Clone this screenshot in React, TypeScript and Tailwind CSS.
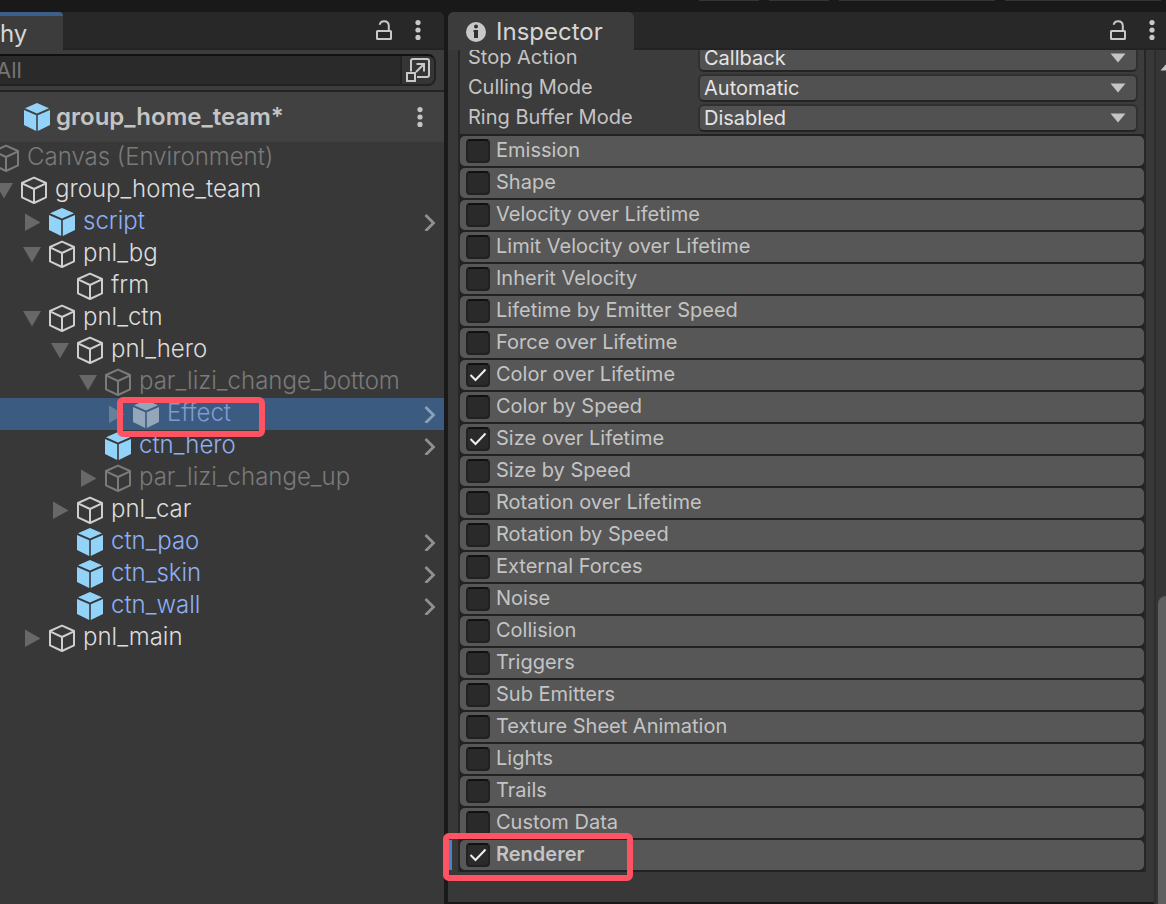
import { useState } from "react";
import clsx from "clsx";

type Kind = "object" | "prefab";

interface TreeItem {
  name: string;
  depth: number;
  kind: Kind;
  arrow?: "open" | "closed";
  dim?: boolean;
  opens?: boolean;
  selected?: boolean;
}

const TREE: TreeItem[] = [
  { name: "Canvas (Environment)", depth: 0, kind: "object", dim: true },
  { name: "group_home_team", depth: 1, kind: "object", arrow: "open" },
  { name: "script", depth: 2, kind: "prefab", arrow: "closed", opens: true },
  { name: "pnl_bg", depth: 2, kind: "object", arrow: "open" },
  { name: "frm", depth: 3, kind: "object" },
  { name: "pnl_ctn", depth: 2, kind: "object", arrow: "open" },
  { name: "pnl_hero", depth: 3, kind: "object", arrow: "open" },
  { name: "par_lizi_change_bottom", depth: 4, kind: "object", arrow: "open", dim: true },
  { name: "Effect", depth: 5, kind: "prefab", arrow: "closed", dim: true, opens: true, selected: true },
  { name: "ctn_hero", depth: 4, kind: "prefab", opens: true },
  { name: "par_lizi_change_up", depth: 4, kind: "object", arrow: "closed", dim: true },
  { name: "pnl_car", depth: 3, kind: "object", arrow: "closed" },
  { name: "ctn_pao", depth: 3, kind: "prefab", opens: true },
  { name: "ctn_skin", depth: 3, kind: "prefab", opens: true },
  { name: "ctn_wall", depth: 3, kind: "prefab", opens: true },
  { name: "pnl_main", depth: 2, kind: "object", arrow: "closed" },
];

const INDENT = ["pl-0", "pl-7", "pl-14", "pl-21", "pl-28", "pl-35"];

const FIELDS = [
  { label: "Stop Action", value: "Callback", options: ["None", "Disable", "Destroy", "Callback"] },
  { label: "Culling Mode", value: "Automatic", options: ["Automatic", "Pause", "Always Simulate"] },
  { label: "Ring Buffer Mode", value: "Disabled", options: ["Disabled", "Pause Until Replaced"] },
];

const MODULES = [
  "Emission",
  "Shape",
  "Velocity over Lifetime",
  "Limit Velocity over Lifetime",
  "Inherit Velocity",
  "Lifetime by Emitter Speed",
  "Force over Lifetime",
  "Color over Lifetime",
  "Color by Speed",
  "Size over Lifetime",
  "Size by Speed",
  "Rotation over Lifetime",
  "Rotation by Speed",
  "External Forces",
  "Noise",
  "Collision",
  "Triggers",
  "Sub Emitters",
  "Texture Sheet Animation",
  "Lights",
  "Trails",
  "Custom Data",
  "Renderer",
];

function Cube({ kind, className }: { kind: Kind; className?: string }) {
  return (
    <svg viewBox="0 0 28 28" className={clsx("size-7 shrink-0", className)} aria-hidden="true">
      {kind === "prefab" ? (
        <g fill="currentColor">
          <path d="M14 0 26 5.2 14 10.4 2 5.2Z" />
          <path d="M1 7 13.2 12.2V28L1 22Z" />
          <path d="M27 7 14.8 12.2V28L27 22Z" />
        </g>
      ) : (
        <g fill="none" stroke="currentColor" strokeWidth="2" strokeLinejoin="round">
          <path d="M14 1.6 26 7V21.4L14 27 2 21.4V7Z" />
          <path d="M2 7.4 14 13 26 7.4M14 13V27" />
        </g>
      )}
    </svg>
  );
}

function Fold({ open, className }: { open: boolean; className: string }) {
  return (
    <svg viewBox="0 0 18 18" className={clsx("size-4.5", className)} fill="currentColor" aria-hidden="true">
      <path d={open ? "M0 2H18L9 17.5Z" : "M2 0.5 17.5 9.5 2 18Z"} />
    </svg>
  );
}

function Lock() {
  return (
    <svg viewBox="0 0 16 20" className="h-5 w-4" fill="none" stroke="currentColor" strokeWidth="2" aria-hidden="true">
      <rect x="1" y="11" width="14" height="8" rx="0.6" />
      <path d="M3.6 4.8C4.2 2.4 5.8 1.2 8 1.2c3 0 4.8 1.9 4.8 4.8v5" />
    </svg>
  );
}

function Dots() {
  return (
    <svg viewBox="0 0 6 20" className="h-5 w-1.5" fill="currentColor" aria-hidden="true">
      <circle cx="3" cy="2.6" r="2.6" />
      <circle cx="3" cy="10" r="2.6" />
      <circle cx="3" cy="17.4" r="2.6" />
    </svg>
  );
}

function HierarchyRow({ item }: { item: TreeItem }) {
  const prefab = item.kind === "prefab";
  return (
    <li className={clsx("relative flex h-8 items-center pr-2", INDENT[item.depth], item.selected && "bg-[#3b5b80]")}>
      <span className="flex w-7 shrink-0 pl-[3px]">
        {item.arrow && (
          <Fold open={item.arrow === "open"} className={item.selected ? "text-[#687f97]" : "text-[#686868]"} />
        )}
      </span>
      <Cube
        kind={item.kind}
        className={
          item.selected
            ? "text-[#94a6b9]"
            : prefab
              ? "text-[#93d3fa]"
              : item.dim
                ? "text-[#7b7b7b]"
                : "text-[#cfcfcf]"
        }
      />
      <span
        className={clsx(
          "grow pb-0.5 pl-[7px] text-2xl leading-7 font-light whitespace-nowrap",
          item.selected
            ? "text-[#809bd0]"
            : prefab
              ? "text-[#8caff5]"
              : item.dim
                ? "text-[#7a7a7a]"
                : "text-[#dcdcdc]",
        )}
      >
        {item.name}
      </span>
      {item.opens && (
        <button aria-label={`Open ${item.name}`} className={item.selected ? "text-[#8ba1b8]" : "text-[#909090]"}>
          <svg viewBox="0 0 12 18" className="h-4.5 w-3" fill="none" stroke="currentColor" strokeWidth="2.8">
            <path d="M1.5 2 9.5 10 1.5 18" />
          </svg>
        </button>
      )}
      {item.selected && (
        <span className="pointer-events-none absolute -top-px left-[153px] z-10 h-10 w-[148px] rounded-md border-6 border-[#ff5364]" />
      )}
    </li>
  );
}

function Hierarchy() {
  return (
    <section className="flex w-[444px] shrink-0 flex-col overflow-hidden rounded-tr-md bg-[#383838]">
      <header className="flex h-9.5 items-stretch border-b-2 border-[#232323] bg-[#282828] text-[#c8c8c8]">
        <h2 className="-mb-0.5 w-[63px] rounded-tr-sm border-t-4 border-[#3d5f8c] bg-[#3c3c3c] text-2xl leading-9 text-[#d6d6d6]">
          hy
        </h2>
        <div className="flex grow items-center justify-end gap-[23px] pr-[23px]">
          <button aria-label="Lock hierarchy">
            <Lock />
          </button>
          <button aria-label="Hierarchy menu">
            <Dots />
          </button>
        </div>
      </header>
      <div className="border-b-2 border-[#232323] bg-[#3c3c3c] pt-1 pr-2 pb-1">
        <div className="flex h-8 overflow-hidden rounded-r-lg border-2 border-l-0 border-[#222222] border-t-[#101010] bg-[#2a2a2a]">
          <input
            aria-label="Search hierarchy"
            placeholder="All"
            className="-ml-1 min-w-0 grow text-[22px] leading-7 text-[#c8c8c8] outline-none placeholder:text-[#747474]"
          />
          <button
            aria-label="Open search window"
            className="flex w-8.5 items-center justify-center border-l-2 border-[#232323] bg-[#353535] text-[#c8c8c8]"
          >
            <svg viewBox="0 0 26 26" className="size-6.5" fill="none" stroke="currentColor" strokeWidth="2">
              <path d="M6 14.500V4a2 2 0 0 1 2-2H22a2 2 0 0 1 2 2V18a2 2 0 0 1-2 2H12" />
              <rect x="2" y="16" width="8" height="8" />
              <path d="M11 15 18.500 7.500M11.500 7H19V14.500" />
            </svg>
          </button>
        </div>
      </div>
      <div className="flex h-[50px] items-center bg-[#414141] pr-[21px] pl-[23px] text-[#c4c4c4]">
        <Cube kind="prefab" className="text-[#93d3fa]" />
        <h3 className="grow pl-[5px] text-2xl leading-8 font-semibold">group_home_team*</h3>
        <button aria-label="Prefab menu">
          <Dots />
        </button>
      </div>
      <ul className="-ml-9">
        {TREE.map((item) => (
          <HierarchyRow key={item.name} item={item} />
        ))}
      </ul>
    </section>
  );
}

function ModuleRow({ name }: { name: string }) {
  const renderer = name === "Renderer";
  const [on, setOn] = useState(renderer || name === "Color over Lifetime" || name === "Size over Lifetime");
  return (
    <li className="relative">
      <label className="flex h-7.5 items-center gap-1.5 rounded-[5px] bg-[#575757] pl-1.5">
        <span className="grid size-6 place-items-center">
          <input
            type="checkbox"
            checked={on}
            onChange={() => setOn(!on)}
            className="col-start-1 row-start-1 size-6 appearance-none rounded border-2 border-[#212121] border-t-[#101010] bg-[#2a2a2a]"
          />
          {on && (
            <svg
              viewBox="0 0 24 24"
              className="pointer-events-none col-start-1 row-start-1 size-6"
              fill="none"
              stroke="#eeeeee"
              strokeWidth="2"
              aria-hidden="true"
            >
              <path d="M4.500 12 9.500 17 19.500 6.500" />
            </svg>
          )}
        </span>
        <span className={clsx("pb-0.5 text-xl leading-7 text-[#c4c4c4]", renderer && "font-semibold")}>{name}</span>
      </label>
      {renderer && (
        <>
          <span className="absolute top-0 -left-3 h-7.5 w-1 bg-[#3e86c4]" />
          <span className="pointer-events-none absolute -top-[7px] -left-[17px] z-10 h-12 w-[190px] rounded-md border-6 border-[#ff5364]" />
        </>
      )}
    </li>
  );
}

function Inspector() {
  return (
    <section className="flex min-w-0 grow flex-col rounded-tl-md bg-[#383838]">
      <header className="flex h-9.5 rounded-tl-md border-b-2 border-[#232323] bg-[#282828] text-[#c8c8c8]">
        <h2 className="-mb-0.5 flex w-[186px] items-center gap-2.5 rounded-t-md bg-[#3c3c3c] pt-0.5 pl-4.5 text-2xl leading-9 text-[#d6d6d6]">
          <svg viewBox="0 0 20 20" className="size-5" aria-hidden="true">
            <circle cx="10" cy="10" r="10" fill="#c8c8c8" />
            <circle cx="10" cy="4.500" r="2" fill="#303030" />
            <path d="M7.500 8H12V16H8V10H7.500Z" fill="#303030" />
          </svg>
          Inspector
        </h2>
        <div className="flex grow items-center justify-end gap-[23px] pr-[11px]">
          <button aria-label="Lock inspector">
            <Lock />
          </button>
          <button aria-label="Inspector menu">
            <Dots />
          </button>
        </div>
      </header>
      <div className="flex grow">
        <div className="flex grow flex-col border-b-2 border-[#191919] pr-2 pl-2.5">
          <div className="border-x-2 border-[#272727] bg-[#222222]">
            <div className="overflow-hidden bg-[#3c3c3c] pr-1.5 pb-0.5 pl-2">
              <div className="-mt-1.5 flex flex-col gap-0.5">
                {FIELDS.map((field) => (
                  <label key={field.label} className="flex h-7 items-center">
                    <span className="w-[230px] shrink-0 pb-0.5 text-xl leading-6 text-[#c4c4c4]">{field.label}</span>
                    <span className="grid grow items-center">
                      <select
                        defaultValue={field.value}
                        className="col-start-1 row-start-1 h-7 appearance-none rounded-md border-2 border-[#303030] border-b-[#242424] bg-[#515151] pl-1 text-xl leading-6 text-[#e4e4e4]"
                      >
                        {field.options.map((option) => (
                          <option key={option}>{option}</option>
                        ))}
                      </select>
                      <svg
                        viewBox="0 0 16 10"
                        className="pointer-events-none col-start-1 row-start-1 mr-3 h-2.5 w-4 justify-self-end"
                        fill="#c4c4c4"
                        aria-hidden="true"
                      >
                        <path d="M0.500 0.500H15.500L8 9.500Z" />
                      </svg>
                    </span>
                  </label>
                ))}
              </div>
            </div>
            <ul className="flex flex-col gap-0.5 py-0.5">
              {MODULES.map((name) => (
                <ModuleRow key={name} name={name} />
              ))}
            </ul>
          </div>
        </div>
        <div className="flex w-3 shrink-0 flex-col overflow-hidden border-l-2 border-[#2e2e2e] bg-[#353535] pl-0.5">
          <svg viewBox="0 0 16 10" className="mt-3 ml-0.5 h-2.5 w-4 shrink-0" fill="#c4c4c4" aria-hidden="true">
            <path d="M0.500 8.500H15.500L8 0Z" />
          </svg>
          <div className="mt-[524px] w-5 grow rounded-tl-lg bg-[#5f5f5f]" />
        </div>
      </div>
    </section>
  );
}

export default function App() {
  return (
    <main className="flex min-h-screen flex-col overflow-hidden bg-[#191919] font-['Inter',sans-serif]">
      <div className="flex h-3 justify-end gap-2.5 pr-[5px]">
        <span className="h-px w-15 bg-[#353535]" />
        <span className="h-px w-15 bg-[#353535]" />
        <span className="h-px w-[156px] bg-[#353535]" />
        <span className="h-px w-[156px] bg-[#353535]" />
      </div>
      <div className="flex grow gap-1">
        <Hierarchy />
        <Inspector />
      </div>
    </main>
  );
}
